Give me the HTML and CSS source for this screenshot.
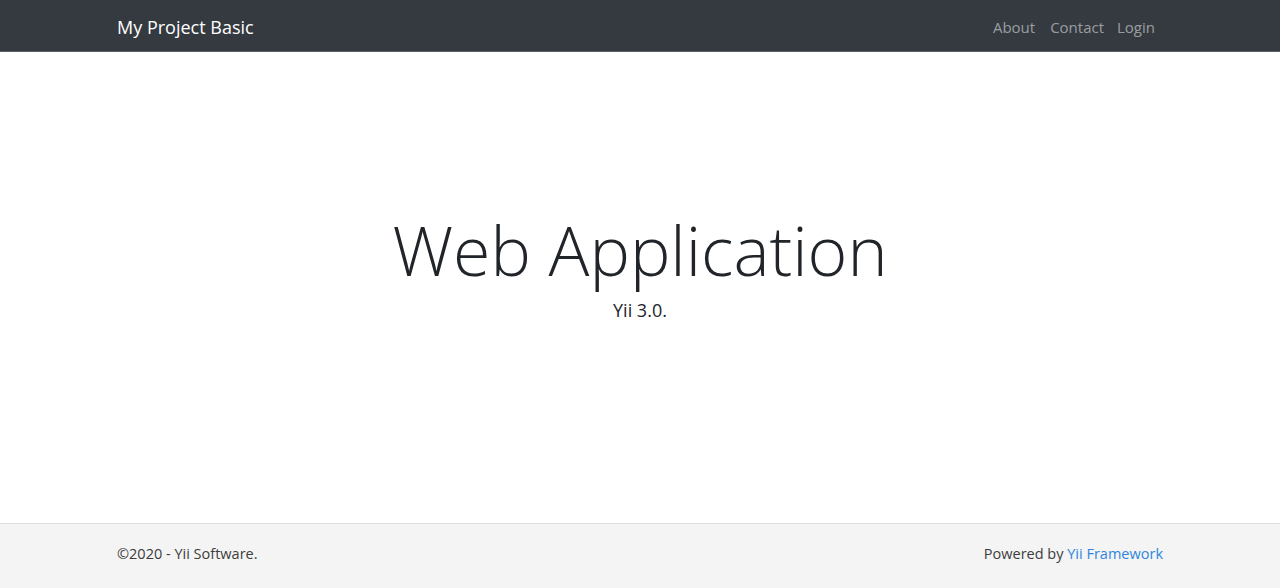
FILE: index.html
```html
<!DOCTYPE html>
<html lang="en">
<head>
    <meta charset="utf-8">
    <meta name="viewport" content="width=device-width, initial-scale=1">
    <title>My Project Basic</title>
    <link rel="stylesheet" href="styles.css">
</head>
<body>
    <nav class="navbar">
        <div class="container navbar-inner">
            <a class="navbar-brand" href="#">My Project Basic</a>
            <ul class="navbar-nav">
                <li><a class="nav-link" href="#">About</a></li>
                <li><a class="nav-link" href="#">Contact</a></li>
                <li><a class="nav-link" href="#">Login</a></li>
            </ul>
        </div>
    </nav>

    <main class="main">
        <div class="jumbotron">
            <h1 class="display-title">Web Application</h1>
            <p class="lead">Yii 3.0.</p>
        </div>
    </main>

    <footer class="footer">
        <div class="container footer-inner">
            <p>&copy;2020 - Yii Software.</p>
            <p>Powered by <a href="#">Yii Framework</a></p>
        </div>
    </footer>
</body>
</html>
```

FILE: styles.css
```css
* {
    box-sizing: border-box;
}
html, body {
    height: 100%;
}
body {
    margin: 0;
    display: flex;
    flex-direction: column;
    font-family: "Open Sans", "Noto Sans", sans-serif;
    font-size: 15px;
    line-height: 1.5;
    color: #212529;
    background-color: #fff;
}
a {
    text-decoration: none;
}
.container {
    width: 100%;
    max-width: 1076px;
    margin: 0 auto;
    padding: 0 15px;
}

/* navbar */
.navbar {
    background-color: #343a40;
    border-bottom: 1px solid #5c6166;
    height: 52px;
}
.navbar-inner {
    height: 100%;
    display: flex;
    align-items: center;
    justify-content: space-between;
}
.navbar-brand {
    color: #fff;
    font-size: 18px;
    line-height: 28px;
    padding-top: 2px;
}
.navbar-nav {
    display: flex;
    margin: 0;
    padding: 3px 0 0;
    list-style: none;
}
.nav-link {
    display: block;
    padding: 0 7px;
    color: rgba(255, 255, 255, 0.5);
    font-size: 15px;
}
.nav-link:hover {
    color: rgba(255, 255, 255, 0.75);
}
.navbar-nav li:first-child .nav-link {
    padding-left: 9px;
    padding-right: 8px;
}
.navbar-nav li:last-child .nav-link {
    padding-left: 6px;
    padding-right: 8px;
}

/* main */
.main {
    flex: 1;
    display: flex;
    justify-content: center;
    padding-top: 157px;
}
.jumbotron {
    text-align: center;
}
.display-title {
    margin: 0 0 6px;
    font-size: 68px;
    font-weight: 300;
    line-height: 1.2;
}
.lead {
    margin: 0;
    font-size: 18px;
}

/* footer */
.footer {
    background-color: #f4f4f4;
    border-top: 1px solid #dddddd;
    padding: 18px 0 22px;
    color: #3d3d3d;
    font-size: 14.5px;
}
.footer-inner {
    display: flex;
    justify-content: space-between;
}
.footer p {
    margin: 0;
    line-height: 24px;
}
.footer a {
    color: #2e86de;
}
```
